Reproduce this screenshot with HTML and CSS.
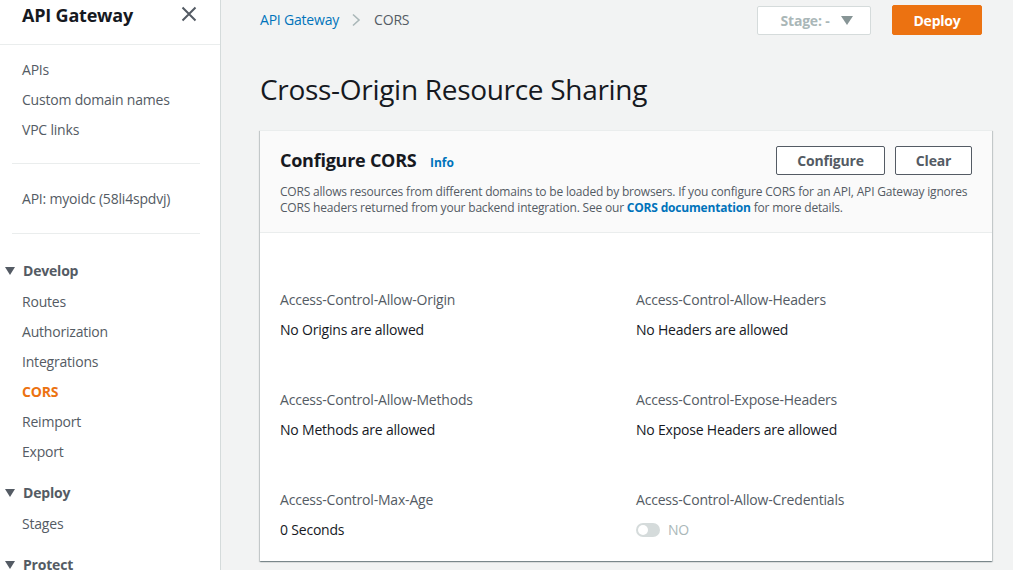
FILE: index.html
```html
<!DOCTYPE html>
<html>
<head>
<meta charset="utf-8">
<link rel="stylesheet" href="styles.css">
</head>
<body>
<div class="app">
  <aside class="sidebar">
    <div class="side-head">
      <span class="side-title">API Gateway</span>
      <svg class="close" width="16" height="16" viewBox="0 0 16 16"><path d="M1.5 1.5L14.5 14.5M14.5 1.5L1.5 14.5" stroke="#545b64" stroke-width="2" fill="none"/></svg>
    </div>
    <nav class="nav-group top">
      <a>APIs</a>
      <a>Custom domain names</a>
      <a>VPC links</a>
    </nav>
    <div class="divider"></div>
    <div class="api-name">API: myoidc (58li4spdvj)</div>
    <div class="divider"></div>
    <div class="section">
      <div class="sec-head"><span class="tri"></span>Develop</div>
      <a>Routes</a>
      <a>Authorization</a>
      <a>Integrations</a>
      <a class="active">CORS</a>
      <a>Reimport</a>
      <a>Export</a>
    </div>
    <div class="section">
      <div class="sec-head"><span class="tri"></span>Deploy</div>
      <a>Stages</a>
    </div>
    <div class="section">
      <div class="sec-head"><span class="tri"></span>Protect</div>
    </div>
  </aside>
  <main class="main">
    <div class="topbar">
      <div class="crumbs">
        <a class="crumb-link">API Gateway</a>
        <svg class="chev" width="10" height="14" viewBox="0 0 10 14"><path d="M2 1.5L8 7L2 12.5" stroke="#aab7b8" stroke-width="1.6" fill="none"/></svg>
        <span class="crumb-cur">CORS</span>
      </div>
      <div class="actions">
        <button class="stage">Stage: - <span class="stage-tri"></span></button>
        <button class="deploy">Deploy</button>
      </div>
    </div>
    <h1 class="page-title">Cross-Origin Resource Sharing</h1>
    <section class="card">
      <header class="card-head">
        <div class="card-row">
          <h2 class="card-title">Configure CORS <span class="info">Info</span></h2>
          <div class="card-btns">
            <button class="btn btn-configure">Configure</button>
            <button class="btn btn-clear">Clear</button>
          </div>
        </div>
        <p class="card-desc">CORS allows resources from different domains to be loaded by browsers. If you configure CORS for an API, API Gateway ignores CORS headers returned from your backend integration. See our <a class="doc">CORS documentation</a> for more details.</p>
      </header>
      <div class="card-body">
        <div class="field"><div class="label">Access-Control-Allow-Origin</div><div class="value">No Origins are allowed</div></div>
        <div class="field"><div class="label">Access-Control-Allow-Headers</div><div class="value">No Headers are allowed</div></div>
        <div class="field"><div class="label">Access-Control-Allow-Methods</div><div class="value">No Methods are allowed</div></div>
        <div class="field"><div class="label">Access-Control-Expose-Headers</div><div class="value">No Expose Headers are allowed</div></div>
        <div class="field"><div class="label">Access-Control-Max-Age</div><div class="value">0 Seconds</div></div>
        <div class="field"><div class="label">Access-Control-Allow-Credentials</div><div class="value toggle-row"><span class="toggle"><span class="knob"></span></span><span class="no">NO</span></div></div>
      </div>
    </section>
  </main>
</div>
</body>
</html>
```

FILE: styles.css
```css
* { box-sizing: border-box; }
html, body { margin: 0; padding: 0; }
body {
  font-family: "Open Sans", "Noto Sans", Arial, sans-serif;
  font-size: 14px;
  color: #16191f;
  background: #f2f3f3;
  width: 1013px;
  height: 570px;
  overflow: hidden;
}
.app { display: flex; height: 570px; }
.sidebar {
  width: 221px;
  flex: none;
  background: #fff;
  border-right: 1px solid #d5dbdb;
  overflow: hidden;
}
.side-head {
  height: 45px;
  border-bottom: 1px solid #eaeded;
  display: flex;
  align-items: flex-start;
  justify-content: space-between;
  padding: 3px 23px 0 22px;
}
.side-title { font-size: 18px; font-weight: 700; color: #16191f; letter-spacing: -0.2px; }
.close { margin-top: 3px; }
.nav-group { display: flex; flex-direction: column; }
.nav-group.top { padding-top: 10px; padding-bottom: 18px; }
.sidebar a {
  display: block;
  color: #545b64;
  font-size: 14px;
  line-height: 30px;
  padding-left: 22px;
  letter-spacing: -0.2px;
}
.divider { height: 1px; background: #eaeded; margin: 0 20px 0 12px; }
.api-name { color: #545b64; padding: 20px 0 19px 22px; line-height: 30px; letter-spacing: -0.2px; }
.section { padding-top: 22px; }
.section + .section { padding-top: 11px; }
.sec-head {
  font-weight: 700;
  color: #545b64;
  line-height: 30px;
  margin-bottom: 1px;
  display: flex;
  align-items: center;
  padding-left: 5px;
  letter-spacing: -0.2px;
}
.tri {
  width: 0; height: 0;
  border-left: 5px solid transparent;
  border-right: 5px solid transparent;
  border-top: 8px solid #545b64;
  margin-right: 8px;
}
.sidebar a.active { color: #ec7211; font-weight: 700; }

.main { flex: 1; padding: 0 21px 0 39px; }
.topbar {
  display: flex;
  justify-content: space-between;
  align-items: center;
  height: 39px;
}
.crumbs { display: flex; align-items: center; gap: 10px; font-size: 14px; letter-spacing: -0.2px; }
.crumb-link { color: #0073bb; }
.chev { margin: 0 3px 0 2px; }
.crumb-cur { color: #545b64; }
.actions { display: flex; gap: 21px; align-items: center; margin-right: 10px; margin-top: 1px; }
button { font-family: inherit; cursor: pointer; }
.stage {
  width: 114px; height: 29px;
  background: #fff;
  border: 1px solid #d5dbdb;
  border-radius: 2px;
  color: #aab7b8;
  font-weight: 700;
  font-size: 14px;
  display: flex; align-items: center; justify-content: center; gap: 12px;
  padding: 0 0 0 6px;
  letter-spacing: -0.2px;
}
.stage-tri {
  width: 0; height: 0;
  border-left: 6px solid transparent;
  border-right: 6px solid transparent;
  border-top: 9px solid #879596;
}
.deploy {
  width: 90px; height: 30px;
  background: #ec7211;
  border: 1px solid #ec7211;
  border-radius: 2px;
  color: #fff;
  font-weight: 700;
  font-size: 14px;
  letter-spacing: -0.2px;
}
.page-title {
  margin: 30px 0 0 0;
  font-size: 28px;
  font-weight: 400;
  line-height: 40px;
  color: #16191f;
  letter-spacing: -0.3px;
}
.card {
  margin-top: 21px;
  background: #fff;
  box-shadow: 0 1px 1px 0 rgba(0,28,36,.3), 1px 1px 1px 0 rgba(0,28,36,.15), -1px 1px 1px 0 rgba(0,28,36,.15);
  border-top: 1px solid #eaeded;
  height: 431px;
}
.card-head {
  background: #fafafa;
  border-bottom: 1px solid #eaeded;
  padding: 15px 20px 16px 20px;
}
.card-row { display: flex; justify-content: space-between; align-items: flex-start; }
.card-title {
  margin: 2px 0 0 0;
  font-size: 18px;
  font-weight: 700;
  color: #16191f;
  line-height: 24px;
  letter-spacing: -0.25px;
}
.info { font-size: 12px; color: #0073bb; margin-left: 9px; font-weight: 700; letter-spacing: 0; }
.card-btns { display: flex; gap: 10px; }
.btn {
  height: 29px;
  background: #fff;
  border: 1px solid #545b64;
  border-radius: 2px;
  color: #545b64;
  font-weight: 700;
  font-size: 14px;
  letter-spacing: -0.2px;
}
.btn-configure { width: 109px; }
.btn-clear { width: 77px; }
.card-desc {
  margin: 9px 0 0 0;
  font-size: 12px;
  line-height: 16px;
  color: #545b64;
  letter-spacing: -0.19px;
}
.doc { color: #0073bb; font-weight: 700; }
.card-body {
  display: grid;
  grid-template-columns: 356px 1fr;
  padding: 56px 20px 0 20px;
  row-gap: 48px;
}
.field { display: flex; flex-direction: column; gap: 8px; }
.label { color: #545b64; line-height: 22px; letter-spacing: -0.2px; }
.value { color: #16191f; line-height: 22px; letter-spacing: -0.2px; }
.toggle-row { display: flex; align-items: center; gap: 8px; }
.toggle {
  width: 24px; height: 14px;
  background: #d5dbdb;
  border-radius: 7px;
  position: relative;
  display: inline-block;
}
.knob {
  position: absolute;
  left: 2px; top: 2px;
  width: 10px; height: 10px;
  border-radius: 50%;
  background: #fff;
}
.no { color: #aab7b8; font-size: 14px; }
```
